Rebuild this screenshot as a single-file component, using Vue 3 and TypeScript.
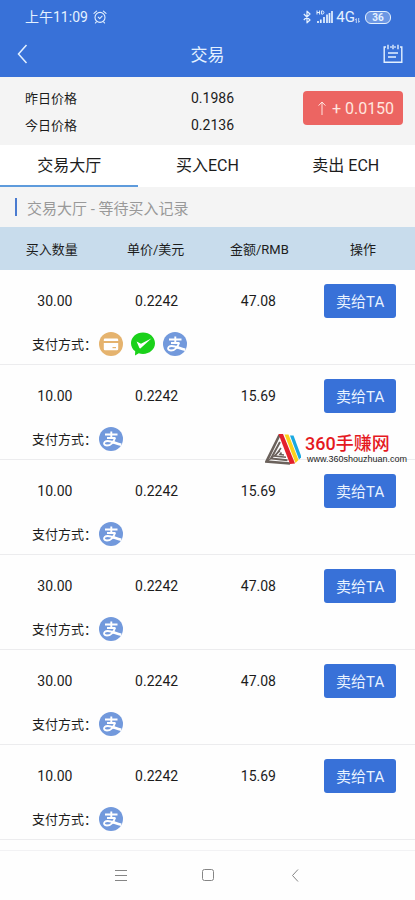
<script setup lang="ts">
import { ref } from 'vue'

type PayMethod = 'card' | 'wechat' | 'alipay'

interface Order {
  id: number
  amount: string
  price: string
  total: string
  methods: PayMethod[]
}

const tabs = ['交易大厅', '买入ECH', '卖出 ECH']
const activeTab = ref(0)

const columns = ['买入数量', '单价/美元', '金额/RMB', '操作']

const orders: Order[] = [
  { id: 1, amount: '30.00', price: '0.2242', total: '47.08', methods: ['card', 'wechat', 'alipay'] },
  { id: 2, amount: '10.00', price: '0.2242', total: '15.69', methods: ['alipay'] },
  { id: 3, amount: '10.00', price: '0.2242', total: '15.69', methods: ['alipay'] },
  { id: 4, amount: '30.00', price: '0.2242', total: '47.08', methods: ['alipay'] },
  { id: 5, amount: '30.00', price: '0.2242', total: '47.08', methods: ['alipay'] },
  { id: 6, amount: '10.00', price: '0.2242', total: '15.69', methods: ['alipay'] },
]
</script>

<template>
  <div class="app" lang="zh-CN">
    <header class="top">
      <div class="status">
        <span class="time">上午11:09</span>
        <svg class="alarm" viewBox="0 0 14 14" width="14" height="14" fill="none" stroke="currentColor" stroke-width="1.1" stroke-linecap="round" stroke-linejoin="round">
          <circle cx="7" cy="7.4" r="5" />
          <path d="M1 3.4 3.6 1.2M13 3.4 10.4 1.2M5.2 7.2l1.5 1.4 2.4-2.4M3.4 11.8l-1 1.2M10.6 11.8l1 1.2" />
        </svg>
        <svg class="bluetooth" viewBox="0 0 8 14" width="8" height="14" fill="none" stroke="currentColor" stroke-width="1.2" stroke-linejoin="round">
          <path d="M.8 4 7 10 4 12.8V1.2L7 4 .8 10" />
        </svg>
        <svg class="signal" viewBox="0 0 17 14" width="17" height="14" fill="none" stroke="currentColor">
          <path d="M1 .5v4M3.600 .5v4M1 2.500h2.600M5.600 .9v3.200h.9c1.900 0 1.900-3.200 0-3.200z" stroke-width="1" />
          <path d="M2 11v2M4.800 9.500V13M8 7v6M11 4.500V13M13.500 3v10M16 1v12" stroke-width="1.700" />
        </svg>
        <span class="network">4G</span>
        <svg class="data" viewBox="0 0 5 5" width="5" height="5" fill="none" stroke="currentColor" stroke-width=".8">
          <path d="M1.300 5V.6L.3 1.800M3.700 0v4.400l1-1.200" />
        </svg>
        <span class="battery">36</span>
      </div>
      <div class="titlebar">
        <button class="icon-button" type="button" aria-label="返回">
          <svg viewBox="0 0 20 20" width="20" height="20" fill="none" stroke="currentColor" stroke-width="1.500">
            <path d="M14.500 1 6.500 10l8 9" />
          </svg>
        </button>
        <h1>交易</h1>
        <button class="icon-button end" type="button" aria-label="记录">
          <svg viewBox="0 0 20 20" width="20" height="20" fill="none" stroke="currentColor" stroke-width="1.400">
            <path d="M3 3H1.200v15.200h17.600V3H17M7.200 3h1.600M11.200 3h1.600M5 .8v4.400M10 .8v4.400M15 .8v4.400M5 9h10M5 13h8" />
          </svg>
        </button>
      </div>
    </header>

    <section class="prices">
      <dl>
        <dt>昨日价格</dt>
        <dd>0.1986</dd>
        <dt>今日价格</dt>
        <dd>0.2136</dd>
      </dl>
      <div class="change">
        <svg viewBox="0 0 8 14" width="8" height="14" fill="none" stroke="currentColor">
          <path d="M4 14V1M.6 4.600 4 1l3.400 3.600" />
        </svg>
        <span>+ 0.0150</span>
      </div>
    </section>

    <nav class="tabs">
      <button
        v-for="(tab, i) in tabs"
        :key="tab"
        type="button"
        :class="{ active: i === activeTab }"
        @click="activeTab = i"
      >{{ tab }}</button>
    </nav>

    <main>
      <h2>交易大厅 - 等待买入记录</h2>
      <table>
        <thead>
          <tr>
            <th v-for="column in columns" :key="column" scope="col">{{ column }}</th>
          </tr>
        </thead>
        <tbody v-for="order in orders" :key="order.id">
          <tr class="figures">
            <td>{{ order.amount }}</td>
            <td>{{ order.price }}</td>
            <td>{{ order.total }}</td>
            <td><button class="sell" type="button">卖给TA</button></td>
          </tr>
          <tr class="payment">
            <td colspan="4">
              <span>支付方式：</span>
              <svg v-for="method in order.methods" :key="method" viewBox="0 0 24 24" width="24" height="24">
                <template v-if="method === 'card'">
                  <circle cx="12" cy="12" r="12" fill="#e5b36e" />
                  <path fill="#fff" d="M6 6.500h12a1.200 1.200 0 0 1 1.200 1.200V9H4.800V7.700A1.200 1.200 0 0 1 6 6.500zM4.800 11h14.400v6a1.200 1.200 0 0 1-1.200 1.200H6A1.200 1.200 0 0 1 4.800 17z" />
                  <path d="M13.500 15.600h3.500" stroke="#e5b36e" stroke-width="1.200" />
                </template>
                <template v-else-if="method === 'wechat'">
                  <path fill="#1ad11a" d="M12 .5c6.600 0 12 4.700 12 10.700s-5.400 10.700-12 10.700c-1.500 0-2.900-.2-4.200-.7L4 23.500l.2-4.200C1.600 17.300 0 14.400 0 11.200 0 5.200 5.400.5 12 .5z" />
                  <path fill="#fff" d="M5.600 9.400 10 11.700 20.600 6.200 9.600 16.200c-.5.4-.9.3-1.200-.2z" />
                </template>
                <template v-else>
                  <circle cx="12" cy="12" r="12" fill="#7299dc" />
                  <g fill="none" stroke="#fff">
                    <path d="M6 7.500h12.500M12.300 4.500v6M8 11h8.500" stroke-width="1.900" />
                    <path d="M16 11c-1.200 3.600-4 7.500-8 7.500-2.900 0-3.700-2.200-2.200-3.600 2.200-2.100 7.200-.3 10.200.9" stroke-width="1.900" />
                    <path d="M13 14.700c3 1 5.800 2.300 9.300 3" stroke-width="2.600" />
                  </g>
                </template>
              </svg>
            </td>
          </tr>
        </tbody>
      </table>
      <div class="watermark">
        <svg viewBox="0 0 36 32" width="36" height="32">
          <g fill="none" stroke="#6b625c">
            <path d="M14.500 2 1.500 28.500 25 30.500" stroke-width="2.600" />
            <path d="M15 9 6 25.500l16.500 1.800" stroke-width="2" />
            <path d="M16 15l-6 8 11 1.300M16.500 19.500l-1.500 2 4 .5" stroke-width="1.600" />
            <path d="M2 28.500 15 18" stroke-width="1.200" />
          </g>
          <path fill="#e3202b" d="M13.500 1h4.500l12 29.500-5 .5z" />
          <path fill="#fbd21c" d="M19.500 1.500h4L33.500 27l-3 3z" />
          <path fill="#1ba9e0" d="M25 2.500h3.500L36.500 24l-2.500 2.500z" />
        </svg>
        <div>
          <strong>360手赚网</strong>
          <small>www.360shouzhuan.com</small>
        </div>
      </div>
    </main>

    <footer>
      <button type="button" aria-label="菜单">
        <svg viewBox="0 0 14 14" width="14" height="14"><path d="M1 2.500h12M1 7.500h12M1 12.500h12" /></svg>
      </button>
      <button type="button" aria-label="主页">
        <svg viewBox="0 0 14 14" width="14" height="14"><rect x="1.500" y="1.500" width="11" height="11" rx="2" /></svg>
      </button>
      <button type="button" aria-label="后退">
        <svg viewBox="0 0 14 14" width="14" height="14"><path d="M10 1.500 4.500 7.500l5.500 6" /></svg>
      </button>
    </footer>
  </div>
</template>

<style>
body {
  margin: 0;
  background: #fefefe;
}
</style>

<style scoped>
.app {
  min-height: 100vh;
  display: flex;
  flex-direction: column;
  color: #1c1c1c;
  font-family: Roboto, "Noto Sans CJK SC", sans-serif;
  font-size: 14px;
}
button {
  margin: 0;
  padding: 0;
  border: 0;
  background: none;
  color: inherit;
  font: inherit;
  cursor: pointer;
}
svg {
  display: block;
  flex: none;
}
.top {
  height: 77px;
  background: #3871d8;
  color: #e4f1ff;
}
.status {
  height: 34px;
  padding: 0 24px 0 25px;
  display: flex;
  align-items: center;
}
.time {
  padding-bottom: 2px;
}
.alarm {
  margin-left: 5px;
  margin-right: auto;
}
.signal {
  margin: 0 3px 0 5px;
}
.network {
  font-size: 15px;
}
.data {
  margin-top: 6px;
}
.battery {
  box-sizing: border-box;
  width: 26px;
  height: 13px;
  margin-left: 5px;
  border: 1px solid #e4f1ff;
  border-radius: 6px;
  background: #6c97e4;
  font-size: 10px;
  font-weight: 700;
  line-height: 11px;
  text-align: center;
}
.titlebar {
  height: 40px;
  padding: 0 12px;
  display: grid;
  grid-template-columns: 1fr auto 1fr;
  align-items: center;
}
.icon-button {
  justify-self: start;
}
.icon-button.end {
  justify-self: end;
}
h1 {
  margin: 0;
  padding-bottom: 2px;
  font-size: 17px;
  font-weight: 400;
}
.prices {
  height: 54px;
  padding: 8px 12px 6px 25px;
  display: flex;
  align-items: flex-start;
  justify-content: space-between;
  background: #f4f4f4;
}
dl {
  margin: 0;
  display: grid;
  grid-template-columns: 166px auto;
  line-height: 27px;
}
dt {
  font-size: 13px;
}
dd {
  margin: 0;
}
.change {
  box-sizing: border-box;
  width: 100px;
  height: 34px;
  margin-top: 6px;
  padding-left: 6px;
  border-radius: 4px;
  display: flex;
  align-items: center;
  justify-content: center;
  gap: 6px;
  background: #ec6562;
  color: #ffe6df;
  font-size: 16px;
}
.tabs {
  height: 42px;
  display: grid;
  grid-template-columns: repeat(3, 1fr);
  background: #fff;
}
.tabs button {
  padding-bottom: 2px;
  border-bottom: 2px solid transparent;
  font-size: 16px;
}
.tabs .active {
  border-bottom-color: #5e9bdc;
}
main {
  position: relative;
}
h2 {
  height: 40px;
  margin: 0;
  padding-left: 15px;
  display: flex;
  align-items: center;
  gap: 10px;
  background: #f4f4f4;
  color: #999;
  font-size: 15px;
  font-weight: 400;
}
h2::before {
  content: "";
  width: 2px;
  height: 18px;
  background: #4a7bd0;
}
table,
thead,
tbody {
  display: block;
}
tr {
  display: grid;
  grid-template-columns: repeat(4, 1fr);
  align-items: center;
}
th,
td {
  padding: 0;
  text-align: center;
}
thead {
  background: #c8dcec;
}
thead tr {
  height: 43px;
}
th {
  font-size: 13px;
  font-weight: 400;
}
tbody {
  border-bottom: 1px solid #ececee;
}
.figures {
  padding: 14px 4px;
}
.sell {
  width: 72px;
  height: 34px;
  padding-bottom: 2px;
  border-radius: 3px;
  display: block;
  margin: 0 auto;
  background: #3871d8;
  color: #e9f3ff;
  font-size: 15px;
}
.payment {
  padding: 0 32px 8px;
  display: block;
}
.payment td {
  height: 24px;
  display: flex;
  align-items: center;
  gap: 8px;
  font-size: 13px;
}
.payment span {
  width: 59px;
  padding-bottom: 2px;
  white-space: nowrap;
}
.watermark {
  position: absolute;
  top: 246px;
  right: 8px;
  display: flex;
  align-items: center;
  gap: 4px;
}
.watermark strong {
  display: block;
  color: #e5191f;
  font-size: 18px;
  font-weight: 500;
  line-height: 20px;
}
.watermark small {
  display: block;
  padding-left: 2px;
  font-family: "Liberation Sans", sans-serif;
  font-size: 9px;
  line-height: 10px;
}
footer {
  height: 50px;
  padding-bottom: 2px;
  box-sizing: border-box;
  margin-top: auto;
  border-top: 1px solid #f2f2f4;
  display: flex;
  align-items: center;
  justify-content: center;
  gap: 73px;
}
footer svg {
  fill: none;
  stroke: #858585;
}
</style>
